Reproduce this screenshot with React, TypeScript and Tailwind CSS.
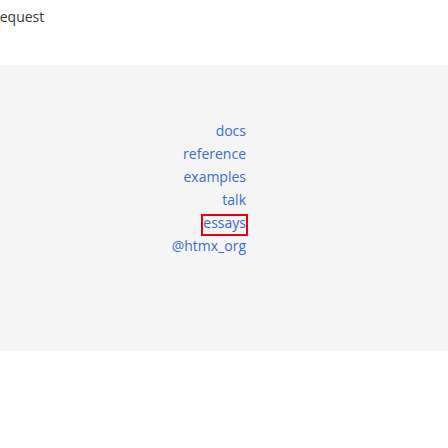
import React from "react";

export default function App() {
  const links = ["docs", "reference", "examples", "talk", "essays", "@htmx_org"];
  return (
    <div className="w-[448px] h-[448px] bg-white overflow-hidden" style={{ fontFamily: '"Open Sans", sans-serif' }}>
      <div className="h-[65px] pt-[5px] text-[14px] leading-[23px] text-[#3a3a3a] -ml-[6px]">request</div>
      <div className="h-[286px] bg-[#f5f5f5] pt-[54px]">
        <div className="w-[246px] flex flex-col items-end">
          {links.map((l) =>
            l === "essays" ? (
              <a
                key={l}
                href="#"
                className="block h-[18px] mt-[4.5px] mb-[0.5px] text-[14px] leading-[14px] text-[#3a6bd6] outline-2 outline-[#e8000b]"
              >
                {l}
              </a>
            ) : (
              <a key={l} href="#" className="text-[14px] leading-[23px] text-[#3a6bd6]">
                {l}
              </a>
            )
          )}
        </div>
      </div>
    </div>
  );
}
